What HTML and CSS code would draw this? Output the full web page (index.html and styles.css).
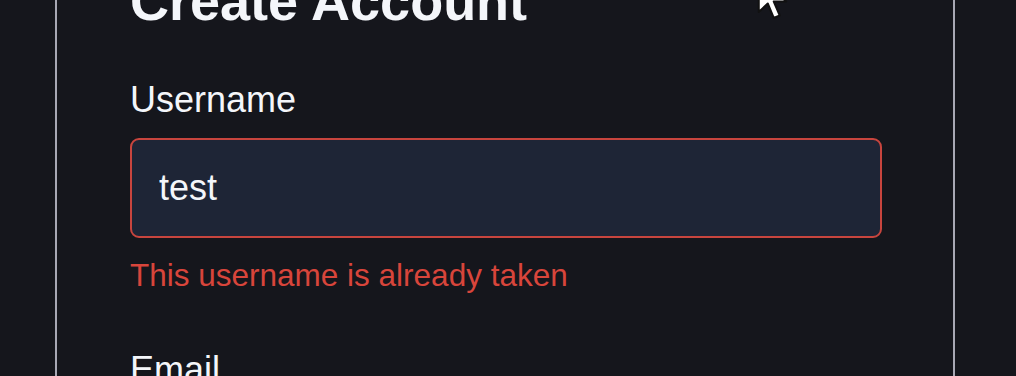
FILE: index.html
```html
<!DOCTYPE html>
<html lang="en">
<head>
    <meta charset="UTF-8">
    <meta name="viewport" content="width=device-width, initial-scale=1.0">
    <title>Create Account</title>
    <link rel="stylesheet" href="styles.css">
</head>
<body>

<div id="card">
    <h2 class="title">Create Account</h2>

    <div class="field">
        <label for="username">Username</label>
        <input id="username" class="invalid" type="text" value="test">
        <div class="error">This username is already taken</div>
    </div>

    <div class="field">
        <label for="email">Email</label>
    </div>
</div>

<svg class="pointer" width="33" height="50" viewBox="0 0 13 20">
    <path d="M1 1 L1 16 L4.6 12.6 L7 18.4 L9.4 17.4 L7 11.8 L12 11.8 Z" fill="#fff" stroke="#111" stroke-width="0.8" stroke-linejoin="round"/>
</svg>

</body>
</html>
```

FILE: styles.css
```css
body {
    font-family: 'Liberation Sans', Arial, sans-serif;
    background-color: #15161c;
    color: #f4f6fa;
    margin: 0;
    height: 376px;
    overflow: hidden;
}

#card {
    width: 900px;
    margin-left: 55px;
    padding: 0 0 0 73px;
    border-left: 2px solid #a8a8b4;
    border-right: 2px solid #a8a8b4;
    height: 420px;
    box-sizing: border-box;
    background-color: #15161c;
}

.title {
    font-size: 54px;
    font-weight: bold;
    line-height: 65px;
    margin: -31px 0 0 0;
}

.field {
    display: flex;
    flex-direction: column;
    margin-top: 39px;
}

.field + .field {
    margin-top: 44px;
}

label {
    font-size: 36px;
    line-height: 54px;
}

input {
    font-family: 'Liberation Sans', Arial, sans-serif;
    font-size: 36px;
    color: #f4f6fa;
    background-color: #1e2536;
    width: 752px;
    height: 100px;
    box-sizing: border-box;
    margin-top: 11px;
    padding: 0 27px;
    border: 2px solid #4a5366;
    border-radius: 9px;
    outline: none;
}

input.invalid {
    border-color: #c8453e;
}

.error {
    color: #d8453b;
    font-size: 31.5px;
    line-height: 47px;
    margin-top: 14px;
}

.pointer {
    position: absolute;
    left: 756px;
    top: -28px;
}
```
